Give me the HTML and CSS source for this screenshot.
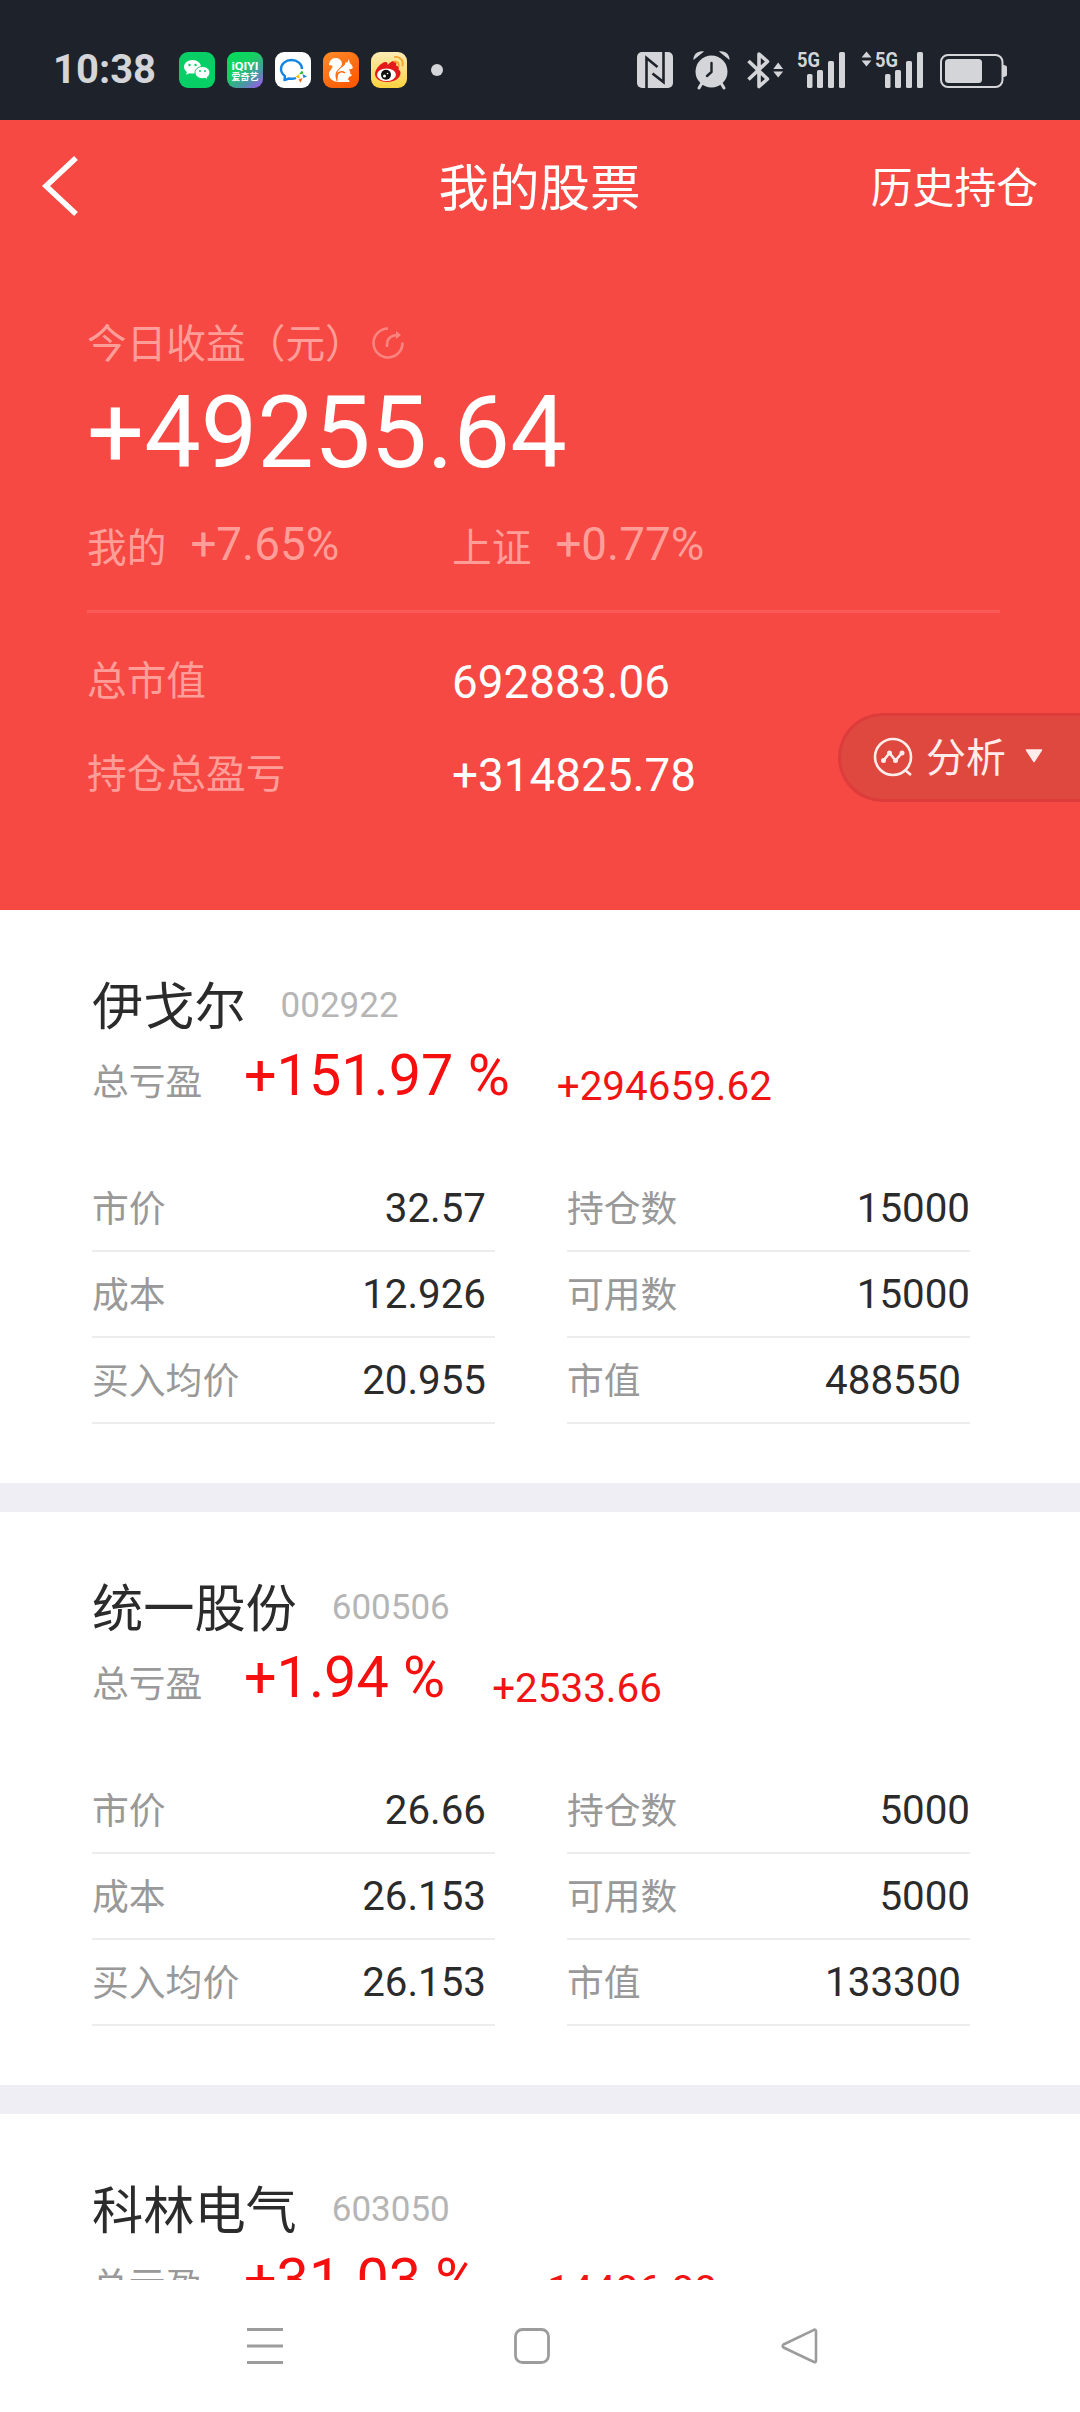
FILE: index.html
```
<!DOCTYPE html>
<html lang="zh-CN">
<head>
    <meta charset="UTF-8">
    <meta name="viewport" content="width=device-width, initial-scale=1.0">
    <title>我的股票</title>
    <link rel="stylesheet" href="styles.css">
</head>
<body>
    <!-- Status bar -->
    <div class="status-bar">
        <span class="time">10:38</span>
        <div class="app-icons">
            <svg width="36" height="36" viewBox="0 0 36 36">
                <rect width="36" height="36" rx="9" fill="#07ce65"/>
                <path d="M13.500 8C8.600 8 5 11 5 14.800c0 2.100 1.100 4 2.900 5.300l-.8 2.700 3.200-1.600c1 .3 2.100.4 3.200.4 4.800 0 8.500-3 8.500-6.800S18.300 8 13.500 8z" fill="#fff"/>
                <path d="M23.500 14.500c-4.200 0-7.500 2.700-7.500 6.100s3.300 6.100 7.500 6.100c.9 0 1.700-.1 2.500-.3l2.800 1.400-.7-2.300c1.700-1.200 2.800-2.900 2.800-4.900 0-3.400-3.200-6.100-7.400-6.100z" fill="#fff" stroke="#07ce65"/>
                <g fill="#07ce65"><circle cx="10.500" cy="13" r="1.200"/><circle cx="16.500" cy="13" r="1.200"/><circle cx="21" cy="19" r="1"/><circle cx="26" cy="19" r="1"/></g>
            </svg>
            <svg width="36" height="36" viewBox="0 0 36 36">
                <defs>
                    <linearGradient id="iqiyi" x1="0.200" y1="0" x2="1" y2="1">
                        <stop offset="0" stop-color="#04da5c"/>
                        <stop offset="0.350" stop-color="#16cf63"/>
                        <stop offset="0.700" stop-color="#4f93a8"/>
                        <stop offset="1" stop-color="#b04cff"/>
                    </linearGradient>
                </defs>
                <rect width="36" height="36" rx="9" fill="url(#iqiyi)"/>
                <text x="18" y="17.500" class="iqiyi-en" textLength="27" lengthAdjust="spacingAndGlyphs">iQIYI</text>
                <text x="18" y="28" class="iqiyi-cn" textLength="27" lengthAdjust="spacingAndGlyphs">爱奇艺</text>
            </svg>
            <svg width="36" height="36" viewBox="0 0 36 36">
                <rect width="36" height="36" rx="9" fill="#fff"/>
                <path d="M21 26c-2.200.9-4.700 1-7 .5L9.500 28l.4-4C7.400 22.200 6 19.800 6 17c0-5.200 4.700-9 10.500-9S27 11.800 27 17" fill="none" stroke="#1485e2" stroke-width="2.400" stroke-linejoin="round"/>
                <path d="M24 22.500l3-4 1.500 3z" fill="#2bb32b"/>
                <path d="M27.500 22l4.500 2.500-3.500 1.500z" fill="#1485e2"/>
                <path d="M27.500 26l-2 4.500-2-3z" fill="#fb6500"/>
                <path d="M25 26.500L20.500 25l3-2.500z" fill="#fcc200"/>
            </svg>
            <svg width="36" height="36" viewBox="0 0 36 36">
                <defs>
                    <linearGradient id="uc" x1="0" y1="0" x2="0.700" y2="1">
                        <stop offset="0" stop-color="#ff8c2a"/>
                        <stop offset="1" stop-color="#ff5a05"/>
                    </linearGradient>
                </defs>
                <rect width="36" height="36" rx="9" fill="url(#uc)"/>
                <!-- squirrel tail, then body -->
                <path d="M14 30c-5-1-8-4-8-8 0-3.500 3.500-5 3.500-7.500 0-1-1.500-1.500-3.500-1.200C6 9.500 8.500 6 12.500 6c3.800 0 6.500 2.500 6.500 5.500 0 4-6.500 6-6.500 11.500 0 3 1 5.500 1.500 7z" fill="#fff"/>
                <path d="M14.500 20c1.500-3.500 5-5 7.200-7l.8-2.500 2-.3L25.800 7l1 4c1.500 1.200 3 3 3 4.800-.5 1.200-2.300 1.700-4 1.700 1.200 1.500 1.700 3 1.500 4.700l1.700.3c-.3 1.500-1.500 2-2.700 2-.3 1.200-1 2-2 2.700 1.500 0 2.200 1.300 2.200 2.800H14c.8-1 .5-2 .5-3z" fill="#fff"/>
                <path d="M14 25.500c-.5-4.500 4-7.500 8-4.500" fill="none" stroke="#ff6e14" stroke-width="1.500"/>
            </svg>
            <svg width="36" height="36" viewBox="0 0 36 36">
                <defs>
                    <linearGradient id="weibo" x1="0" y1="0" x2="0" y2="1">
                        <stop offset="0" stop-color="#fdebb5"/>
                        <stop offset="1" stop-color="#ffd33f"/>
                    </linearGradient>
                </defs>
                <rect width="36" height="36" rx="9" fill="url(#weibo)"/>
                <path d="M4 22c0-5 6.500-12 10.500-12 2 0 2.500 1.500 2 3 3-2.500 4-4 6.500-4 2 0 3 1.800 2 4.500 2.500.5 3.500 1.500 2.500 4 1.500.7 2 2 2 3.500 0 5-6 9-13 9S4 27 4 22z" fill="#e3191b"/>
                <ellipse cx="15.500" cy="22.800" rx="9.500" ry="6.300" fill="#fff"/>
                <circle cx="15" cy="22.800" r="5" fill="#111"/>
                <circle cx="13.500" cy="24" r="1.500" fill="#fff"/>
                <circle cx="16.500" cy="21.500" r=".8" fill="#fff"/>
                <path d="M24 5c5-.8 8.800 3.500 7.500 8.500M23.500 9.500c2.800-.3 5 2 4.200 4.800" fill="none" stroke="#f7a62c" stroke-width="1.900" stroke-linecap="round"/>
            </svg>
        </div>
        <span class="dot"></span>
        <svg class="sys-icons" width="372" height="40" viewBox="636 50 372 40" fill="#d3d5d8">
            <!-- NFC -->
            <rect x="637" y="52" width="36" height="36" rx="5"/>
            <path d="M646.500 89V58l11 9M663.500 51v31l-11-8.500" fill="none" stroke="#1e222b" stroke-width="2.600"/>
            <!-- alarm -->
            <circle cx="711.500" cy="71.500" r="16"/>
            <path d="M702 83l-3 5M721 83l3 5" stroke="#d3d5d8" stroke-width="3" stroke-linecap="round"/>
            <path d="M693.500 60c-.5-5 4-9.500 10.500-8.500zM729.500 60c.5-5-4-9.500-10.500-8.500z"/>
            <path d="M711.500 63v9l-4.500 4" fill="none" stroke="#1e222b" stroke-width="2.400" stroke-linecap="round"/>
            <!-- bluetooth -->
            <path d="M748.500 61l19 18-8.500 7.500V54l8.500 7.500-19 18" fill="none" stroke="#d3d5d8" stroke-width="3.600" stroke-linejoin="round"/>
            <path d="M773.300 69l4.900-6.500 4.900 6.500zM773.300 71.500l4.900 6 4.900-6z"/>
            <!-- signal 1 -->
            <text x="797" y="67" class="net" textLength="23" lengthAdjust="spacingAndGlyphs">5G</text>
            <rect x="807" y="74" width="5.500" height="14" rx="1.500"/>
            <rect x="817" y="70" width="6" height="18" rx="1.500"/>
            <rect x="828" y="61" width="6" height="27" rx="1.500"/>
            <rect x="839" y="52" width="6" height="36" rx="1.500"/>
            <!-- signal 2 -->
            <path d="M861.600 57.500l4.900-6 4.900 6zM861.600 60.500l4.900 6 4.900-6z"/>
            <text x="875" y="67" class="net" textLength="23" lengthAdjust="spacingAndGlyphs">5G</text>
            <rect x="885" y="74" width="5.500" height="14" rx="1.500"/>
            <rect x="895" y="70" width="6" height="18" rx="1.500"/>
            <rect x="906" y="61" width="6" height="27" rx="1.500"/>
            <rect x="917" y="52" width="6" height="36" rx="1.500"/>
            <!-- battery -->
            <rect x="941" y="55" width="61.500" height="32" rx="7" fill="none" stroke="#d3d5d8" stroke-width="2"/>
            <rect x="945" y="59" width="37" height="24" rx="3.500"/>
            <path d="M1003 65c3 0 4 1 4 2.500v7c0 1.500-1 2.500-4 2.500z"/>
        </svg>
    </div>

    <!-- Red header with today's profit -->
    <div class="header">
        <div class="title-bar">
            <svg class="back" width="38" height="62" viewBox="0 0 38 62"><path d="M35 3L5 31l30 28" fill="none" stroke="#fff" stroke-width="5.500"/></svg>
            <h1>我的股票</h1>
            <a class="history">历史持仓</a>
        </div>
        <div class="summary">
            <div class="today-label">
                <span>今日收益（元）</span>
                <svg width="34" height="34" viewBox="0 0 34 34" fill="none" stroke="#fa8580" stroke-width="2.600">
                    <path d="M17 2.500A14.500 14.500 0 1 0 31.500 16.500"/>
                    <path d="M16 21c-.5-8 3-12 12-12"/>
                    <path d="M25 5l5 4-5 4z" fill="#fa8580" stroke="none"/>
                </svg>
            </div>
            <div class="today-value">+49255.64</div>
            <div class="compare">
                <div><span class="label">我的</span><span class="rate">+7.65%</span></div>
                <div><span class="label">上证</span><span class="rate">+0.77%</span></div>
            </div>
            <div class="totals">
                <div class="total-row"><span class="label">总市值</span><span class="value">692883.06</span></div>
                <div class="total-row"><span class="label">持仓总盈亏</span><span class="value">+314825.78</span></div>
            </div>
        </div>
        <div class="analyse">
            <svg width="40" height="40" viewBox="0 0 40 40" fill="none" stroke="#ffeceb" stroke-width="2.600">
                <circle cx="20" cy="19" r="18"/>
                <path d="M32 32l6 5M10.500 22.500l6-7.500 6 7.500 6-7"/>
                <g fill="#ffeceb" stroke="none"><circle cx="10.500" cy="22.500" r="2.500"/><circle cx="16.500" cy="15" r="2.500"/><circle cx="22.500" cy="22.500" r="2.500"/><circle cx="29" cy="15" r="2.500"/></g>
            </svg>
            <span>分析</span>
            <svg class="caret" width="18" height="14" viewBox="0 0 18 14"><path d="M1.500 1h15L9 12.500z" fill="#ffeceb" stroke="#ffeceb" stroke-width="1.500" stroke-linejoin="round"/></svg>
        </div>
    </div>

    <!-- Holdings -->
    <div class="stocks">
        <div class="stock">
            <div class="stock-name"><h2>伊戈尔</h2><span class="code">002922</span></div>
            <div class="profit"><span class="label">总亏盈</span><span class="percent">+151.97 %</span><span class="amount">+294659.62</span></div>
            <div class="details">
                <div class="item"><span>市价</span><b class="inset">32.57</b></div>
                <div class="item"><span>持仓数</span><b>15000</b></div>
                <div class="item"><span>成本</span><b class="inset">12.926</b></div>
                <div class="item"><span>可用数</span><b>15000</b></div>
                <div class="item"><span>买入均价</span><b class="inset">20.955</b></div>
                <div class="item"><span>市值</span><b class="inset">488550</b></div>
            </div>
        </div>
        <div class="stock">
            <div class="stock-name"><h2>统一股份</h2><span class="code">600506</span></div>
            <div class="profit"><span class="label">总亏盈</span><span class="percent">+1.94 %</span><span class="amount">+2533.66</span></div>
            <div class="details">
                <div class="item"><span>市价</span><b class="inset">26.66</b></div>
                <div class="item"><span>持仓数</span><b>5000</b></div>
                <div class="item"><span>成本</span><b class="inset">26.153</b></div>
                <div class="item"><span>可用数</span><b>5000</b></div>
                <div class="item"><span>买入均价</span><b class="inset">26.153</b></div>
                <div class="item"><span>市值</span><b class="inset">133300</b></div>
            </div>
        </div>
        <div class="stock">
            <div class="stock-name"><h2>科林电气</h2><span class="code">603050</span></div>
            <div class="profit"><span class="label">总亏盈</span><span class="percent">+31.03 %</span><span class="amount">+14486.88</span></div>
        </div>
    </div>

    <!-- System navigation -->
    <div class="nav-bar">
        <svg width="38" height="38" viewBox="0 0 38 38"><path d="M1 2.500h36M1 19h36M1 35.500h36" stroke="#9c9c9c" stroke-width="3"/></svg>
        <svg width="38" height="38" viewBox="0 0 38 38"><rect x="2.500" y="2.500" width="33" height="33" rx="7" fill="none" stroke="#9c9c9c" stroke-width="2.800"/></svg>
        <svg width="38" height="38" viewBox="0 0 38 38"><path d="M34 2.800L3.500 17.500c-1.200.8-1.200 2.200 0 3L34 35c1 .4 2 0 2-1.200V4c0-1.200-1-1.600-2-1.200z" fill="none" stroke="#9c9c9c" stroke-width="2.600"/></svg>
    </div>
</body>
</html>
```

FILE: styles.css
```
body {
    font-family: Roboto, "Noto Sans CJK SC", sans-serif;
    margin: 0;
    width: 1080px;
    height: 2412px;
    overflow: hidden;
    display: flex;
    flex-direction: column;
    background: #fff;
    color: #2b2b2b;
}
h1, h2, b {
    margin: 0;
    font-weight: 400;
}
svg {
    display: block;
    flex: none;
    overflow: visible;
}
.status-bar {
    display: flex;
    align-items: center;
    box-sizing: border-box;
    height: 120px;
    padding: 20px 72px 0 53px;
    background: #1e222b;
}
.time {
    width: 126px;
    font-size: 40px;
    line-height: 48px;
    font-weight: 700;
    color: #d3d5d8;
}
.app-icons {
    display: flex;
    gap: 12px;
}
.iqiyi-en, .iqiyi-cn {
    fill: #fff;
    text-anchor: middle;
    font-size: 11px;
    font-weight: 700;
}
.iqiyi-cn {
    font-size: 9.5px;
}
.dot {
    width: 12px;
    height: 12px;
    margin-left: 24px;
    border-radius: 50%;
    background: #d3d5d8;
}
.sys-icons {
    margin-left: auto;
}
.net {
    font-size: 21px;
    font-weight: 700;
}

.header {
    position: relative;
    flex: none;
    height: 790px;
    background: #f64944;
    color: #fff;
}
.title-bar {
    display: grid;
    grid-template-columns: 1fr auto 1fr;
    align-items: center;
    height: 132px;
    padding: 0 42px 0 41px;
}
.title-bar h1 {
    padding-top: 5px;
    font-size: 50.5px;
    line-height: 60px;
}
.history {
    justify-self: end;
    padding-top: 5px;
    font-size: 41.8px;
    line-height: 60px;
}
.summary {
    padding: 61px 80px 0 87px;
}
.summary .label, .today-label {
    font-size: 39.7px;
    color: #ff9e99;
}
.today-label {
    display: flex;
    align-items: center;
    height: 60px;
    gap: 6px;
}
.today-label span {
    padding-bottom: 6px;
}
.today-value {
    height: 118px;
    line-height: 120px;
    font-size: 100.7px;
}
.compare {
    display: grid;
    grid-template-columns: 365px 1fr;
    height: 119px;
    border-bottom: 3px solid #fa5b56;
}
.compare div {
    display: flex;
    align-items: center;
    gap: 24px;
    height: 106px;
}
.rate {
    font-size: 45.8px;
    color: #ff9e99;
}
.totals {
    padding-top: 23px;
}
.total-row {
    display: grid;
    grid-template-columns: 365px 1fr;
    align-items: center;
    height: 93px;
}
.total-row .label {
    padding-bottom: 11px;
}
.total-row .value {
    font-size: 45.8px;
}
/* floating button stuck to the right edge */
.analyse {
    position: absolute;
    right: 0;
    top: 593px;
    width: 242px;
    height: 89px;
    box-sizing: border-box;
    padding-left: 32px;
    display: flex;
    align-items: center;
    border: 3px solid #dd3c3b;
    border-right: 0;
    border-radius: 45px 0 0 45px;
    background: #df483f;
    font-size: 40px;
    color: #ffeceb;
}
.analyse span {
    margin-left: 13px;
    padding-bottom: 6px;
}
.caret {
    margin: 0 0 4px 19px;
}

.stocks {
    flex: none;
    height: 1370px;
    overflow: hidden;
}
.stock {
    box-sizing: border-box;
    height: 602px;
    padding: 64px 110px 0 92px;
    border-bottom: 29px solid #efeef4;
}
.stock-name {
    display: flex;
    align-items: center;
    height: 62px;
    gap: 35px;
}
.stock-name h2 {
    padding-bottom: 5px;
    font-size: 51.2px;
}
.code {
    font-size: 35px;
    color: #b5b5b5;
}
.profit {
    display: flex;
    align-items: baseline;
    height: 130px;
    line-height: 80px;
}
.profit .label {
    width: 152px;
    font-size: 36.8px;
    color: #999;
}
.percent {
    font-size: 57.5px;
    color: #f60f0f;
}
.amount {
    margin-left: 47px;
    padding-top: 5px;
    font-size: 40.4px;
    color: #f01414;
    transform: translateY(5px);
}
.details {
    display: grid;
    grid-template-columns: 403px 403px;
    column-gap: 72px;
}
.item {
    display: flex;
    justify-content: space-between;
    align-items: center;
    box-sizing: border-box;
    height: 86px;
    border-bottom: 2px solid #ededed;
}
.item span {
    padding-bottom: 4px;
    font-size: 36.8px;
    color: #999;
}
.item b {
    font-size: 40.3px;
}
.item .inset {
    padding-right: 9px;
}

.nav-bar {
    display: flex;
    justify-content: center;
    align-items: center;
    gap: 229px;
    height: 132px;
    padding-right: 16px;
}
```
